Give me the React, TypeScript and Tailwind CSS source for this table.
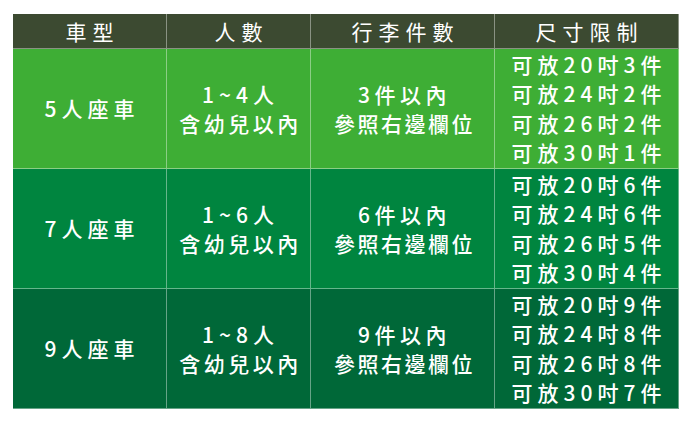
import React from "react";

type Row = {
  car: string;
  people: string;
  bags: string;
  sizes: string[];
  bg: string;
};

const rows: Row[] = [
  {
    car: "5人座車",
    people: "1~4人",
    bags: "3件以內",
    sizes: ["可放20吋3件", "可放24吋2件", "可放26吋2件", "可放30吋1件"],
    bg: "bg-[#3eae35]",
  },
  {
    car: "7人座車",
    people: "1~6人",
    bags: "6件以內",
    sizes: ["可放20吋6件", "可放24吋6件", "可放26吋5件", "可放30吋4件"],
    bg: "bg-[#00853f]",
  },
  {
    car: "9人座車",
    people: "1~8人",
    bags: "9件以內",
    sizes: ["可放20吋9件", "可放24吋8件", "可放26吋8件", "可放30吋7件"],
    bg: "bg-[#006838]",
  },
];

const headers = ["車型", "人數", "行李件數", "尺寸限制"];

const cell = "flex flex-col items-center justify-center border-r border-b border-white/40 text-center";

export default function App() {
  return (
    <div
      className="w-[692px] h-[422px] bg-white pt-[13px] pl-[12px] text-white"
      style={{ fontFamily: '"Noto Sans CJK TC", "Noto Sans", sans-serif' }}
    >
      <div className="grid w-[666px] grid-cols-[154px_144px_184px_184px] grid-rows-[35px_120px_120px_120px] border-l border-t border-white/40">
        {headers.map((h) => (
          <div key={h} className={`${cell} bg-[#3c4a31] text-[21px] leading-[34px] tracking-[6px] pl-[6px]`}>
            {h}
          </div>
        ))}
        {rows.map((r) => (
          <React.Fragment key={r.car}>
            <div className={`${cell} ${r.bg} text-[21px] font-medium leading-[29px] tracking-[5px] pl-[5px]`}>
              <p>{r.car}</p>
            </div>
            <div className={`${cell} ${r.bg} text-[21px] font-medium leading-[29px] pl-[4px]`}>
              <p className="tracking-[5px]">{r.people}</p>
              <p className="tracking-[3.5px]">含幼兒以內</p>
            </div>
            <div className={`${cell} ${r.bg} text-[21px] font-medium leading-[29px] pl-[4px]`}>
              <p className="tracking-[4.5px]">{r.bags}</p>
              <p className="tracking-[2.5px]">參照右邊欄位</p>
            </div>
            <div className={`${cell} ${r.bg} text-[21px] font-medium leading-[29.5px] tracking-[5px] pl-[5px]`}>
              {r.sizes.map((s) => (
                <p key={s}>{s}</p>
              ))}
            </div>
          </React.Fragment>
        ))}
      </div>
    </div>
  );
}
